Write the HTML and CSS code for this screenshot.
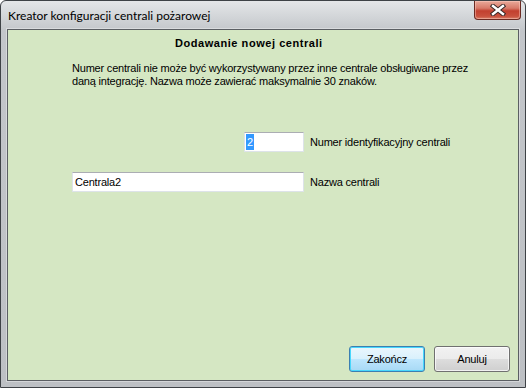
FILE: index.html
```html
<!DOCTYPE html>
<html lang="pl">
<head>
<meta charset="utf-8">
<title>Kreator konfiguracji centrali pożarowej</title>
<link rel="stylesheet" href="styles.css">
</head>
<body>
<div class="window">
  <div class="titlebar">
    <span class="title">Kreator konfiguracji centrali pożarowej</span>
    <div class="close">
      <svg width="16" height="12" viewBox="0 0 16 12">
        <path d="M3 2 L13 10 M13 2 L3 10" stroke="#3a2a28" stroke-width="4.4" stroke-linecap="square"/>
        <path d="M3 2 L13 10 M13 2 L3 10" stroke="#ffffff" stroke-width="2.4" stroke-linecap="square"/>
      </svg>
    </div>
  </div>
  <div class="client">
    <div class="heading">Dodawanie nowej centrali</div>
    <p class="desc">Numer centrali nie może być wykorzystywany przez inne centrale obsługiwane przez<br>daną integrację. Nazwa może zawierać maksymalnie 30 znaków.</p>
    <div class="form">
      <div class="field short"><span class="sel">2</span></div>
      <span class="label">Numer identyfikacyjny centrali</span>
      <div class="field">Centrala2</div>
      <span class="label">Nazwa centrali</span>
    </div>
    <div class="buttons">
      <div class="btn default">Zakończ</div>
      <div class="btn">Anuluj</div>
    </div>
  </div>
</div>
</body>
</html>
```

FILE: styles.css
```css
html, body {
  margin: 0;
  padding: 0;
  background: #ffffff;
}
body {
  font-family: "Liberation Sans", Arial, sans-serif;
  font-size: 11px;
  color: #000;
}
.window {
  width: 526px;
  height: 388px;
  box-sizing: border-box;
  border: 1px solid #3e4246;
  border-radius: 6px 6px 0 0;
  background: linear-gradient(to bottom, #e4e6e8 0px, #d2d5d8 16px, #c3c6ca 30px, #bdc0c4 100%);
  display: flex;
  flex-direction: column;
  padding: 0 6px 6px 6px;
  overflow: hidden;
}
.titlebar {
  height: 28px;
  display: flex;
  align-items: flex-start;
  justify-content: space-between;
  margin: 0 -1px 0 0;
}
.title {
  font-family: Lato, "Liberation Sans", sans-serif;
  font-size: 12px;
  line-height: 14px;
  padding-top: 8px;
  padding-left: 1px;
  color: #000;
}
.close {
  width: 45px;
  height: 18px;
  border: 1px solid #6b2a22;
  border-top: none;
  border-radius: 0 0 4px 4px;
  background: linear-gradient(to bottom, #e9a99a 0%, #d77a69 40%, #c2402f 55%, #c9513d 85%, #d8806a 100%);
  box-shadow: inset 0 0 0 1px rgba(255, 210, 200, 0.45);
  display: flex;
  align-items: center;
  justify-content: center;
  margin-right: -1px;
}
.close svg {
  display: block;
}
.client {
  flex: 1;
  border: 1px solid #5b5f63;
  box-shadow: 0 0 0 1px rgba(255, 255, 255, 0.35);
  background: #d5e7c3;
  display: flex;
  flex-direction: column;
  padding: 7px 8px 8px 64px;
}
.heading {
  font-weight: bold;
  line-height: 13px;
  padding-left: 103px;
  letter-spacing: 0.55px;
}
.desc {
  margin: 12px 0 0 0;
  line-height: 13px;
  letter-spacing: -0.2px;
}
.form {
  margin-top: 44px;
  display: grid;
  grid-template-columns: 232px auto;
  column-gap: 6px;
  row-gap: 20px;
  align-items: center;
}
.field {
  height: 20px;
  box-sizing: border-box;
  border: 1px solid #dde3e9;
  border-top-color: #abadb3;
  background: #fff;
  padding: 0 2px;
  line-height: 18px;
  white-space: nowrap;
  letter-spacing: -0.2px;
}
.field.short {
  width: 60px;
  justify-self: end;
  padding-left: 1px;
}
.sel {
  display: inline-block;
  background: #3399ff;
  color: #fff;
  padding: 0 1px;
  line-height: 16px;
  margin-top: 1px;
}
.label {
  line-height: 13px;
  letter-spacing: -0.2px;
}
.buttons {
  margin-top: auto;
  display: flex;
  justify-content: flex-end;
  gap: 9px;
}
.btn {
  width: 76px;
  height: 26px;
  box-sizing: border-box;
  border: 1px solid #707070;
  border-radius: 3px;
  background: linear-gradient(to bottom, #f2f2f2 0%, #ebebeb 50%, #dddddd 51%, #cfcfcf 100%);
  box-shadow: inset 0 0 0 1px rgba(255, 255, 255, 0.7);
  display: flex;
  align-items: center;
  justify-content: center;
  letter-spacing: -0.2px;
}
.btn.default {
  border-color: #3c7fb1;
  background: linear-gradient(to bottom, #eaf6fd 0%, #d9f0fc 50%, #bee6fd 51%, #a7d9f5 100%);
  box-shadow: inset 0 0 0 1px #48d7fc;
}
```
